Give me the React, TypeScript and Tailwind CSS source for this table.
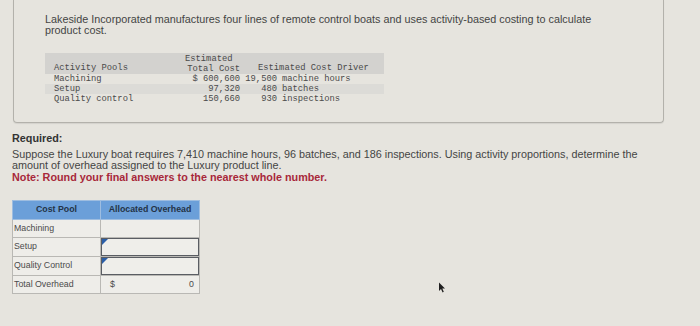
import React from 'react';

const POOLS = [
  { name: 'Machining', cost: '$ 600,600', qty: '19,500', unit: 'machine hours', shade: false },
  { name: 'Setup', cost: '97,320', qty: '480', unit: 'batches', shade: true },
  { name: 'Quality control', cost: '150,660', qty: '930', unit: 'inspections', shade: false },
];

const mono = { fontFamily: '"Liberation Mono", "DejaVu Sans Mono", monospace' };

function InputCell() {
  return (
    <div className="relative h-full border border-[#5a5d63] bg-[#efeeea]">
      <span className="absolute left-0 top-0 h-0 w-0 border-l-[3px] border-t-[3px] border-l-[#2b5fa8] border-t-[#2b5fa8] border-r-[3px] border-b-[3px] border-r-transparent border-b-transparent" />
    </div>
  );
}

export default function App() {
  return (
    <div
      className="relative h-[326px] w-[700px] overflow-hidden bg-[#e6e4de] text-[#3d3d3d]"
      style={{ fontFamily: '"Liberation Sans", Arial, sans-serif' }}
    >
      <div className="ml-[13px] h-[123px] w-[651px] rounded-b-[4px] border-x border-b border-[#b3b1ab] pl-[31px] pt-[14px] shadow-[0_1px_1px_rgba(0,0,0,0.08)]">
        <p className="text-[10.8px] leading-[11px] text-[#444]">
          Lakeside Incorporated manufactures four lines of remote control boats and uses activity-based costing to calculate
          <br />
          product cost.
        </p>

        <div className="mt-[17px] w-[339px] text-[8.8px] leading-[10px] text-[#4a4a4a]" style={mono}>
          <div className="flex h-[21px] bg-[#d3d2cf] pl-[9px]">
            <div className="w-[131px] self-end pb-[1px]">Activity Pools</div>
            <div className="w-[55px] pt-[1px] text-right">
              <div className="pr-[8px]">Estimated</div>
              <div>Total Cost</div>
            </div>
            <div className="self-end pb-[1px] pl-[18px]">Estimated Cost Driver</div>
          </div>
          {POOLS.map((p) => (
            <div key={p.name} className={`flex h-[10px] pl-[9px] ${p.shade ? 'bg-[#dcdbd7]' : ''}`}>
              <div className="w-[131px]">{p.name}</div>
              <div className="w-[55px] text-right">{p.cost}</div>
              <div className="w-[37px] text-right">{p.qty}</div>
              <div className="pl-[5px]">{p.unit}</div>
            </div>
          ))}
        </div>
      </div>

      <div className="ml-[12px] mt-[10px] text-[10.8px] leading-[11px]">
        <p className="font-bold text-[#333]">Required:</p>
        <p className="mt-[5px] text-[#444]">
          Suppose the Luxury boat requires 7,410 machine hours, 96 batches, and 186 inspections. Using activity proportions, determine the
          <br />
          amount of overhead assigned to the Luxury product line.
        </p>
        <p className="mt-[1px] font-bold text-[#a8283a]">Note: Round your final answers to the nearest whole number.</p>
      </div>

      <table className="ml-[12px] mt-[17px] w-[188px] border-collapse text-[8.8px]">
        <thead>
          <tr className="h-[19px] bg-[#6b9fd9] font-bold text-[#233347]">
            <th className="w-[88px] border border-[#9ebde0] font-bold">Cost Pool</th>
            <th className="border border-[#9ebde0] font-bold">Allocated Overhead</th>
          </tr>
        </thead>
        <tbody className="text-[#4b4b4b]">
          <tr className="h-[18px]">
            <td className="border border-[#b9b8b4] bg-[#eeede9] pl-[1px]">Machining</td>
            <td className="border border-[#b9b8b4] border-b-[#7a7a7a] bg-[#eeede9]" style={{ borderBottomStyle: 'dotted' }} />
          </tr>
          <tr className="h-[19px]">
            <td className="border border-[#b9b8b4] bg-[#eeede9] pl-[1px]">Setup</td>
            <td className="h-[19px] border border-[#b9b8b4] p-0">
              <InputCell />
            </td>
          </tr>
          <tr className="h-[19px]">
            <td className="border border-[#b9b8b4] bg-[#eeede9] pl-[1px]">Quality Control</td>
            <td className="h-[19px] border border-[#b9b8b4] p-0">
              <InputCell />
            </td>
          </tr>
          <tr className="h-[18px]">
            <td className="border border-[#b9b8b4] bg-[#eeede9] pl-[1px]">Total Overhead</td>
            <td className="border border-[#b9b8b4] bg-[#eeede9]">
              <div className="flex justify-between pl-[9px] pr-[5px]">
                <span>$</span>
                <span>0</span>
              </div>
            </td>
          </tr>
        </tbody>
      </table>

      <svg className="absolute left-[438px] top-[282px]" width="8" height="11" viewBox="0 0 8 11">
        <path d="M1 0.5 L1 9 L3 7 L4.6 10.4 L5.8 9.8 L4.3 6.6 L7 6.5 Z" fill="#1f1f1f" />
      </svg>
    </div>
  );
}
